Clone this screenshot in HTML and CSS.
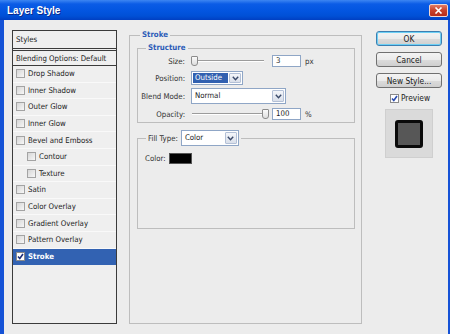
FILE: index.html
```html
<!DOCTYPE html>
<html lang="en">
<head>
	<meta charset="UTF-8">
	<title>Layer Style</title>
	<link rel="stylesheet" href="styles.css">
</head>
<body>
	<div class="window">
		<div class="titlebar">
			<span class="title">Layer Style</span>
			<span class="close">
				<svg width="9" height="7" viewBox="0 0 9 7"><path d="M1.5 0.5 L7.5 6.5 M7.5 0.5 L1.5 6.5" stroke="#fff" stroke-width="1.6" fill="none"/></svg>
			</span>
		</div>
		<div class="frame">
			<ul class="styles-list">
				<li class="head">Styles</li>
				<li class="head blend">Blending Options: Default</li>
				<li><span class="cb"></span>Drop Shadow</li>
				<li><span class="cb"></span>Inner Shadow</li>
				<li><span class="cb"></span>Outer Glow</li>
				<li><span class="cb"></span>Inner Glow</li>
				<li><span class="cb"></span>Bevel and Emboss</li>
				<li class="sub"><span class="cb"></span>Contour</li>
				<li class="sub"><span class="cb"></span>Texture</li>
				<li><span class="cb"></span>Satin</li>
				<li><span class="cb"></span>Color Overlay</li>
				<li><span class="cb"></span>Gradient Overlay</li>
				<li><span class="cb"></span>Pattern Overlay</li>
				<li class="active"><span class="cb on"><svg width="7" height="7" viewBox="0 0 7 7"><path d="M1 3.5 L2.8 5.5 L6 1" stroke="#1d2f7a" stroke-width="1.6" fill="none"/></svg></span>Stroke</li>
			</ul>

			<fieldset class="group stroke">
				<legend>Stroke</legend>
				<fieldset class="group structure">
					<legend>Structure</legend>
					<div class="rows">
						<label>Size:</label>
						<div class="slider"><span class="track"></span><span class="thumb"></span></div>
						<span class="num">3</span>
						<span class="unit">px</span>

						<label>Position:</label>
						<div class="select pos focused"><span class="val">Outside</span><span class="arrow"><svg width="7" height="5" viewBox="0 0 7 5"><path d="M0.8 0.8 L3.5 3.8 L6.2 0.8" stroke="#3a4a6a" stroke-width="1.4" fill="none"/></svg></span></div>

						<label>Blend Mode:</label>
						<div class="select mode"><span class="val">Normal</span><span class="arrow"><svg width="7" height="5" viewBox="0 0 7 5"><path d="M0.8 0.8 L3.5 3.8 L6.2 0.8" stroke="#3a4a6a" stroke-width="1.4" fill="none"/></svg></span></div>

						<label>Opacity:</label>
						<div class="slider full"><span class="track"></span><span class="thumb"></span></div>
						<span class="num">100</span>
						<span class="unit">%</span>
					</div>
				</fieldset>

				<fieldset class="group fill">
					<legend>
						<label>Fill Type:</label>
						<div class="select kind"><span class="val">Color</span><span class="arrow"><svg width="7" height="5" viewBox="0 0 7 5"><path d="M0.8 0.8 L3.5 3.8 L6.2 0.8" stroke="#3a4a6a" stroke-width="1.4" fill="none"/></svg></span></div>
					</legend>
					<div class="color-row">
						<label>Color:</label>
						<span class="swatch"></span>
					</div>
				</fieldset>
			</fieldset>

			<div class="side">
				<button class="btn default">OK</button>
				<button class="btn">Cancel</button>
				<button class="btn">New Style...</button>
				<div class="preview-check"><span class="cb on"><svg width="7" height="7" viewBox="0 0 7 7"><path d="M1 3.5 L2.8 5.5 L6 1" stroke="#2a4cb0" stroke-width="1.6" fill="none"/></svg></span>Preview</div>
				<div class="preview-box"><span class="preview-shape"></span></div>
			</div>
		</div>
	</div>
</body>
</html>
```

FILE: styles.css
```css
html,body,div,ul,li,span,fieldset,legend,label,button {
	margin: 0;
	padding: 0;
}
body {
	width: 450px;
	height: 334px;
	overflow: hidden;
	background: #ececec;
	font-family: "Liberation Sans Narrow", "DejaVu Sans Condensed", "Liberation Sans", sans-serif;
	font-size: 7.8px;
	color: #222;
}
li {
	list-style: none;
}
.window {
	display: flex;
	flex-direction: column;
	height: 334px;
}

/* title bar */
.titlebar {
	height: 20px;
	display: flex;
	align-items: center;
	justify-content: space-between;
	padding: 0 2px 0 7px;
	background: linear-gradient(#3d86f2 0, #0b5ce6 20%, #0255e0 55%, #0050d6 80%, #003fc2 100%);
}
.title {
	font-family: "Liberation Sans", sans-serif;
	font-weight: bold;
	font-size: 10px;
	color: #fff;
	text-shadow: 1px 1px 0 #0a2a8a;
}
.close {
	width: 17px;
	height: 11px;
	display: flex;
	align-items: center;
	justify-content: center;
	border: 1px solid #f1d6d0;
	border-radius: 2px;
	background: linear-gradient(#e27a63, #c8412a 50%, #b52d1b);
}

/* dialog body */
.frame {
	flex: 1;
	display: flex;
	align-items: flex-start;
	padding: 10px 0 0 8px;
	border-left: 4px solid #1552d6;
	border-right: 2px solid #1552d6;
}

/* styles list */
.styles-list {
	width: 105px;
	height: 294px;
	box-sizing: border-box;
	border: 1px solid #3b3b3b;
	background: #efefef;
	flex: none;
}
.styles-list li {
	height: 16.6px;
	box-sizing: border-box;
	display: flex;
	align-items: center;
	padding-left: 3px;
	border-bottom: 1px solid #f9f9f9;
	white-space: nowrap;
}
.styles-list .head {
	height: 17px;
	border-bottom: none;
}
.styles-list .head:first-child {
	height: 20px;
	border-bottom: 3px double #3b3b3b;
}
.styles-list .blend {
	height: 15px;
	border-bottom: 1px solid #3b3b3b;
}
.styles-list .sub {
	padding-left: 14px;
}
.styles-list .active {
	background: #3262b2;
	color: #fff;
	font-weight: bold;
	border-bottom-color: #3262b2;
}
.cb {
	width: 9px;
	height: 9px;
	box-sizing: border-box;
	border: 1px solid #a3a3a3;
	background: linear-gradient(135deg, #d6d6d6, #f7f7f7);
	margin-right: 3px;
	flex: none;
	display: flex;
	align-items: center;
	justify-content: center;
}
.cb.on {
	background: #fff;
	border-color: #8a8a8a;
}

/* group boxes */
.group {
	border: 1px solid #bdbdbd;
	min-width: 0;
}
.group > legend {
	font-weight: bold;
	color: #2d5cb8;
	line-height: 10px;
	padding: 0 2px;
}
.stroke {
	width: 233px;
	height: 294px;
	box-sizing: border-box;
	margin-left: 12px;
	padding: 0 6px 0 7px;
	flex: none;
}
.stroke > legend {
	margin-left: 3px;
}
.structure {
	margin-top: 3px;
	padding: 1px 0 1px 0;
}
.structure > legend {
	margin-left: 8px;
}
.rows {
	display: grid;
	grid-template-columns: 53px 81px 32px auto;
	grid-template-rows: 14px 14px 16px 14px;
	row-gap: 3px;
	align-items: center;
}
.rows label {
	grid-column: 1;
	text-align: right;
	padding-right: 6px;
	color: #333;
	white-space: nowrap;
}
.slider {
	position: relative;
	height: 14px;
	width: 77px;
}
.slider .track {
	position: absolute;
	left: 1px;
	right: 4px;
	top: 6px;
	height: 1px;
	background: #9c9c9c;
	border-bottom: 1px solid #fff;
}
.slider .thumb {
	position: absolute;
	left: 0;
	top: 2px;
	width: 5px;
	height: 8px;
	border: 1px solid #8c8c8c;
	border-radius: 1px 1px 3px 3px;
	background: linear-gradient(#fafafa, #dedede);
}
.slider.full .thumb {
	left: 71px;
}
.num {
	width: 29px;
	height: 12px;
	box-sizing: border-box;
	border: 1px solid #8fa6c6;
	background: #fff;
	padding-left: 3px;
	line-height: 10px;
}
.unit {
	color: #333;
	padding-left: 1px;
}
.select {
	display: flex;
	box-sizing: border-box;
	border: 1px solid #8fa6c6;
	background: #fff;
	height: 14px;
	padding: 1px;
}
.select .val {
	flex: 1;
	line-height: 10px;
	padding-left: 2px;
}
.select .arrow {
	width: 12px;
	display: flex;
	align-items: center;
	justify-content: center;
	box-sizing: border-box;
	border: 1px solid #b3c0d6;
	border-radius: 1px;
	background: linear-gradient(#f4f6fa, #d9dfea);
}
.select.pos {
	grid-column: 2 / span 2;
	width: 52px;
}
.select.focused .val {
	background: #3160b0;
	color: #fff;
	margin-right: 1px;
}
.select.mode {
	grid-column: 2 / span 3;
	width: 95px;
	height: 16px;
}
.select.mode .val {
	line-height: 12px;
}
.fill {
	margin-top: 7px;
	padding: 6px 0 64px 7px;
}
.fill > legend {
	display: flex;
	align-items: center;
	margin-left: 1px;
	font-weight: normal;
	color: #333;
	line-height: normal;
}
.select.kind {
	width: 58px;
	height: 16px;
	margin-left: 3px;
	color: #222;
}
.select.kind .val {
	line-height: 12px;
}
.color-row {
	display: flex;
	align-items: center;
	height: 12px;
	color: #333;
}
.swatch {
	width: 23px;
	height: 11px;
	margin-left: 3px;
	background: #000;
	border: 1px solid #555;
	box-sizing: border-box;
}

/* right column */
.side {
	width: 66px;
	margin-left: 14px;
	display: flex;
	flex-direction: column;
	align-items: stretch;
	padding-top: 1px;
	flex: none;
}
.btn {
	height: 15px;
	margin-bottom: 6px;
	border: 1px solid #707070;
	border-radius: 3px;
	background: linear-gradient(#f3f3f3, #ebebeb 50%, #dcdcdc 51%, #cfcfcf);
	font-family: inherit;
	font-size: 8.3px;
	color: #1a1a1a;
	line-height: 12px;
}
.btn.default {
	border-color: #3c7fb1;
	box-shadow: inset 0 0 0 1px #6dd0f5;
}
.preview-check {
	display: flex;
	align-items: center;
	justify-content: center;
	margin-top: -1px;
	height: 10px;
	padding-left: 2px;
	font-size: 8.3px;
}
.preview-check .cb {
	margin-right: 2px;
}
.preview-box {
	width: 48px;
	height: 49px;
	box-sizing: border-box;
	margin: 6px auto 0;
	background: #dadada;
	border: 1px solid #cfcfcf;
	display: flex;
	align-items: center;
	justify-content: center;
}
.preview-shape {
	width: 28px;
	height: 28px;
	box-sizing: border-box;
	background: #575757;
	border: 3px solid #0a0a0a;
	border-radius: 3px;
}
```
